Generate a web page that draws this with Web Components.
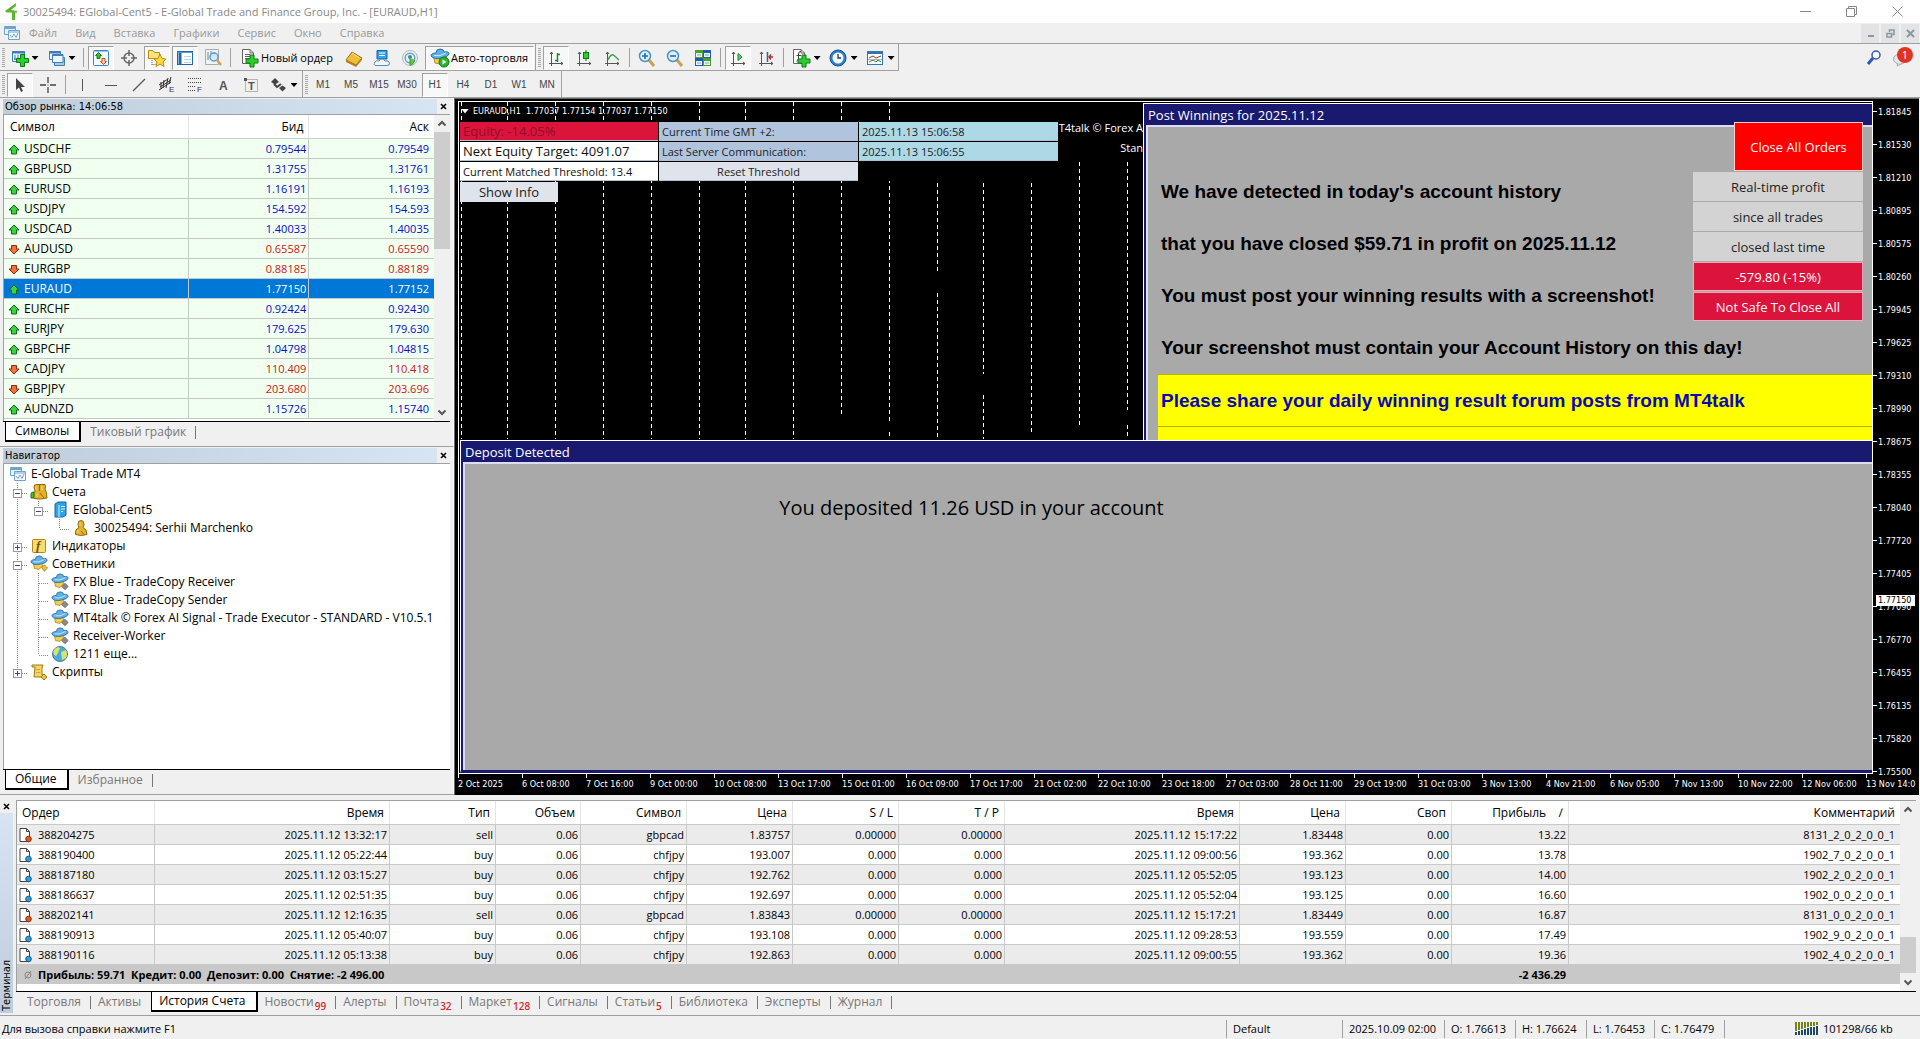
<!DOCTYPE html>
<html lang="ru">
<head>
<meta charset="utf-8">
<title>30025494: EGlobal-Cent5</title>
<style>
html,body{margin:0;height:100%}
body{background:#f0f0f0;color:#000;font:11px/16px "Open Sans","Noto Sans",sans-serif;overflow:hidden}
</style>
</head>
<body>
<mt-window>
  <mt-titlebar slot="top">30025494: EGlobal-Cent5 - E-Global Trade and Finance Group, Inc. - [EURAUD,H1]</mt-titlebar>
  <mt-menubar slot="top"></mt-menubar>
  <mt-toolbars slot="top"></mt-toolbars>
  <mt-panel slot="left" heading="Обзор рынка: 14:06:58" tabs="Символы|Тиковый график"><mt-market></mt-market></mt-panel>
  <mt-panel slot="left" grow heading="Навигатор" tabs="Общие|Избранное"><mt-navigator></mt-navigator></mt-panel>
  <mt-chart slot="main"></mt-chart>
  <mt-terminal slot="bottom"></mt-terminal>
  <mt-status slot="bottom"></mt-status>
</mt-window>
<script>
const BASE = `:host,*{box-sizing:border-box}button{font:inherit;color:inherit;background:none;border:0;padding:0;margin:0}svg{display:block}`;
function define(tag, css, render) {
  customElements.define(tag, class extends HTMLElement {
    constructor() { super(); this.attachShadow({ mode: "open" }); }
    connectedCallback() {
      this.shadowRoot.innerHTML = `<style>${BASE}${css}</style>` + render(this);
    }
  });
}

/* ---------- icons ---------- */
const HAT = `<path d="M4 10 5 15 10 16 14 12 13 8Z" fill="#f5cf46" stroke="#b58d1c"/><path d="M1 8Q1 5 6 5Q6 1 10 1Q14 1 14 4Q19 3 19 6Q18 9 12 10Q4 12 1 8Z" fill="#5fb0e6" stroke="#2d6fa5"/><path d="M4 7.500Q10 9 16 5" fill="none" stroke="#cfeaff"/>`;
const AXES = `<path d="M4.500 3V17M2 14.500H16M3 5 4.500 3 6 5M14 13 16 14.500 14 16" fill="none" stroke="#555"/>`;
const PLUS = (x, y) => `<path transform="translate(${x} ${y})" d="M4 0H8V4H12V8H8V12H4V8H0V4H4Z" fill="#2bd12b" stroke="#0c7a12"/>`;
const DOC = `<path d="M2.500 1.500H10L13.500 5V15.500H2.500Z" fill="#fff" stroke="#666"/><path d="M10 1.500V5H13.500" fill="none" stroke="#666"/>`;
const ICONS = {
  logo: [20, `<path d="M14 1 3 9 4.500 10.500H15V9L9 8 14 4Z" fill="#5cb531"/><path d="M11.500 9V18" stroke="#5cb531" stroke-width="3"/>`],
  charts: [18, `<path d="M1.500 2.500H12.500V10.500H1.500Z" fill="#e6f3ff" stroke="#6fa4cf"/><path d="M1 4H13" stroke="#6fa4cf" stroke-width="2"/><path d="M5.500 6.500H16.500V15.500H5.500Z" fill="#f4faff" stroke="#6fa4cf"/><path d="M5 8H17" stroke="#6fa4cf"/><path d="M7 11 9 13.500 11 10 13 13.500 15 9" fill="none" stroke="#6fa4cf"/>`],
  newchart: [18, `<path d="M1.500 2.500H13.500V12.500H1.500Z" fill="#eaf5ff" stroke="#3f7fb5"/><path d="M1 3.500H14" stroke="#3f7fb5" stroke-width="2"/><path d="M4 6V11M7 5.500V10M3 10H8" stroke="#3f7fb5"/>${PLUS(5.5,5.5)}`],
  profiles: [18, `<path d="M1.500 2.500H12.500V10.500H1.500Z" fill="#eaf5ff" stroke="#3f7fb5"/><path d="M1 3.500H13" stroke="#3f7fb5" stroke-width="2"/><path d="M6.500 8.500H16.500V16.500H6.500Z" fill="#a9c9e6" stroke="#3f7fb5"/><path d="M4.500 5.500H15V13.500H4.500Z" fill="#eaf5ff" stroke="#3f7fb5"/><path d="M4 6.500H15" stroke="#3f7fb5"/>`],
  market: [18, `<rect x="1.500" y="1.500" width="15" height="15" rx="1" fill="#f3faff" stroke="#3a85c4"/><path d="M1.500 2.500H16.500" stroke="#9cc4e4"/><path d="M6.500 3.500 9.500 6.500H8V9.500H5V6.500H3.500Z" fill="#35c535" stroke="#107b14"/><path d="M11.500 15.500 14.500 12.500H13V9.500H10V12.500H8.500Z" fill="#ffd0a8" stroke="#d0501c"/>`],
  cross: [18, `<circle cx="9" cy="9" r="5" fill="none" stroke="#666" stroke-width="1.500"/><path d="M9 1V7M9 11V17M1 9H7M11 9H17" stroke="#666" stroke-width="1.500"/>`],
  navig: [20, `<path d="M1.500 2.500H6L7.500 4.500H12.500V10.500H1.500Z" fill="#ffe37a" stroke="#b98c17"/><path d="M5 12V17M5.500 16.500H10" stroke="#666" stroke-dasharray="1 1"/><path d="M13 6 15 10.500 19 11 16 14 17 18.500 13 16 9 18.500 10 14 7 11 11 10.500Z" fill="#ffd83c" stroke="#b98c17"/>`],
  term: [18, `<rect x="1.500" y="2.500" width="15" height="13" fill="#fff" stroke="#2068ad"/><path d="M1.500 3.500H16.500" stroke="#5b9bd0"/><path d="M4 4V15" stroke="#2068ad" stroke-width="3"/><path d="M8 7.500H15M8 10.500H15M8 13.500H15" stroke="#b7d7f1"/>`],
  tester: [20, `<path d="M2.500 1.500H15.500V16.500H2.500Z" fill="#eef3f7" stroke="#aaa"/><path d="M5 4V12M8 3V9M11 4V8" stroke="#688" /><circle cx="11" cy="9" r="4" fill="#cfeaff" fill-opacity=".8" stroke="#5b9bd0" stroke-width="1.500"/><path d="M14 12 18 17" stroke="#d0a24a" stroke-width="2.500"/>`],
  order: [20, `${DOC}<path d="M5 6.500H10M5 8.500H11M5 10.500H9" stroke="#666"/>${PLUS(6,7)}`],
  meta: [18, `<path d="M1 11 7 3 17 9 11 16Z" fill="#f0bf3a" stroke="#9d6f10"/><path d="M1 11 11 16 17 9 17 11 11 18 1 13Z" fill="#b8801a"/><path d="M7 4 14 8.500" stroke="#ffe9a0"/>`],
  vps: [18, `<path d="M4 1.500H14V10H4Z" fill="#2ea3ea" stroke="#12669c"/><path d="M6 4H12M6 6.500H12" stroke="#fff"/><path d="M3 16.500Q0 16 2 13Q3 11 6 12Q9 8 12 12Q16 11 16.500 14Q17 16.500 14 16.500Z" fill="#eef6ff" stroke="#5b86b5"/>`],
  signal: [18, `<circle cx="9" cy="9" r="7.500" fill="#e9f4f7" stroke="#a9b9bf"/><circle cx="9" cy="9" r="4.800" fill="none" stroke="#6c9fba" stroke-width="1.400"/><circle cx="9" cy="8" r="2" fill="#3d86b5"/><path d="M9 9V16.500Q13 15 14 11" fill="#63c14c" stroke="#3f9f35"/>`],
  auto: [20, `${HAT}<circle cx="14" cy="14" r="5" fill="#2cb52c" stroke="#0c7a12"/><path d="M12.500 11.500 16.500 14 12.500 16.500Z" fill="#fff"/>`],
  bars: [18, `${AXES}<path d="M10.500 4V13M10.500 5.500H13M8 11.500H10.500" stroke="#1b8a34" stroke-width="1.500"/>`],
  candles: [18, `${AXES}<path d="M11 1V12" stroke="#0c7a12"/><rect x="8.500" y="3.500" width="5" height="6" fill="#2bd12b" stroke="#0c7a12"/>`],
  line: [18, `${AXES}<path d="M5 11Q8 4 11 6.500T16 11" fill="none" stroke="#3aa04a" stroke-width="1.400"/>`],
  zin: [18, `<path d="M11 11 16 17" stroke="#c9a24c" stroke-width="3"/><circle cx="7" cy="7" r="5.500" fill="#d9f0ff" stroke="#4a92c8" stroke-width="1.500"/><path d="M4 7H10M7 4V10" stroke="#2a6aa4" stroke-width="1.600"/>`],
  zout: [18, `<path d="M11 11 16 17" stroke="#c9a24c" stroke-width="3"/><circle cx="7" cy="7" r="5.500" fill="#d9f0ff" stroke="#4a92c8" stroke-width="1.500"/><path d="M4 7H10" stroke="#2a6aa4" stroke-width="1.600"/>`],
  tile: [18, `<rect x="1" y="1" width="8" height="8" fill="#4c9f2a"/><rect x="9" y="1" width="8" height="8" fill="#1f5cb0"/><rect x="1" y="9" width="8" height="8" fill="#1f5cb0"/><rect x="9" y="9" width="8" height="8" fill="#4c9f2a"/><path d="M2 4H8V8H2ZM10 4H16V8H10ZM2 12H8V16H2ZM10 12H16V16H10Z" fill="#e7f4ff"/><path d="M3 6H7M11 6H15M3 14H7M11 14H15" stroke="#7aa"/>`],
  scroll: [18, `${AXES}<path d="M9 4.500 13 8 9 11.500Z" fill="#5bd36a" stroke="#1b8a34"/>`],
  shift: [18, `${AXES}<path d="M10.500 3V13" stroke="#2068ad" stroke-width="1.500"/><path d="M16 8H12M14 5.500 12 8 14 10.500" fill="none" stroke="#b03020" stroke-width="1.400"/>`],
  indi: [20, `${DOC}<path d="M10 3.500Q7.500 3 7.500 6V11Q7.500 13 5.500 13M5.500 7.500H10" fill="none" stroke="#444"/>${PLUS(7,7)}`],
  clock: [20, `<circle cx="10" cy="10" r="8" fill="#2a7fd0" stroke="#15508c"/><circle cx="10" cy="10" r="5.500" fill="#f2f8ff"/><path d="M10 6V10H13" fill="none" stroke="#333" stroke-width="1.300"/>`],
  tmpl: [20, `<rect x="2.500" y="3.500" width="15" height="13" fill="#fff" stroke="#3277b5"/><path d="M2 4.500H18" stroke="#3277b5" stroke-width="3"/><path d="M4 10 8 8 11 10 16 8" fill="none" stroke="#b03020"/><path d="M4 14 8 12 11 14 13 12 16 14" fill="none" stroke="#1b8a34"/><path d="M3 11.500H17" stroke="#9bb"/>`],
  cursor: [16, `<path d="M4 1V13L7 10.500 9 15 11 14 9 10H13Z" fill="#444"/>`],
  plus: [18, `<path d="M9 1V7M9 11V17M1 9H7M11 9H17" stroke="#444" stroke-width="1.300"/><path d="M9 8.500V9.500" stroke="#444"/>`],
  vline: [16, `<path d="M7.500 2V14" stroke="#555"/>`],
  hline: [16, `<path d="M2 8.500H14" stroke="#555"/>`],
  tline: [16, `<path d="M2 14 14 2" stroke="#555" stroke-width="1.200"/>`],
  chan: [18, `<path d="M1 9 10 3M1 14 13 6M3 6V13M6 4 5 12M10 2 8 12M13 1 11 8M2 11 13 4" stroke="#333"/><text x="11" y="16" font-family="Liberation Sans" font-size="8" fill="#333">E</text>`],
  fibo: [18, `<path d="M2 2.500H16M2 6.500H16M2 10.500H10M2 14.500H10" stroke="#444" stroke-dasharray="1 1"/><text x="11" y="16" font-family="Liberation Sans" font-size="8" fill="#333">F</text>`],
  atext: [16, `<text x="4" y="13" font-family="Liberation Sans" font-weight="700" font-size="12" fill="#555">A</text>`],
  label: [16, `<rect x="2.500" y="2.500" width="12" height="12" fill="none" stroke="#777" stroke-dasharray="1 1"/><text x="5" y="13" font-family="Liberation Sans" font-weight="700" font-size="11" fill="#555">T</text><path d="M1 1H4V4H1Z" fill="#555"/>`],
  arrows: [18, `<path d="M1 6 5 2 9 6 5 8.500Z" fill="#444"/><path d="M4 8 7 11 11 8" fill="none" stroke="#444" stroke-width="2"/><path d="M9 12 12.500 9.500 16 12 12.500 15.500Z" fill="#444"/>`],
  search: [18, `<circle cx="11" cy="6" r="4" fill="#f6faff" stroke="#2d57b8" stroke-width="1.500"/><path d="M8 9 3 15" stroke="#2d57b8" stroke-width="3"/>`],
  chat: [18, `<ellipse cx="8" cy="10" rx="6.500" ry="5" fill="#e4e6e8" stroke="#a4a8ac"/><path d="M6 14 5 17 10 14.500" fill="#e4e6e8" stroke="#a4a8ac"/>`],
  accounts: [18, `<path d="M1 15V11Q1 9 4 9V15Z" fill="#35c535" stroke="#107b14"/><path d="M4 4Q4 1 7 1.500L15 1.500Q16 4 15 6Q17 9 17 15Q10 17 4 15.500Q4 10 5 8Z" fill="#e2b22c" stroke="#8f6a10"/><path d="M9.500 2V8M10 10 14 15" stroke="#8f6a10"/><path d="M6 3V7M12 3V7M7 10V14" stroke="#f6dc7c"/>`],
  server: [18, `<path d="M4 3 7 1H15V14L12 16H4Z" fill="#2ea3ea" stroke="#12669c"/><path d="M8 4V16M10 5.500H14M10 8H14M10 10.500H12" stroke="#d6f1ff"/>`],
  user: [18, `<path d="M6 5Q6 1.500 9 1.500T12 5Q12 7 11 8.500Q15 10 15 15.500Q9 17.500 3.500 15.500Q3 10 7 8.500Q6 7 6 5Z" fill="#e2b22c" stroke="#8f6a10"/><path d="M9 12 12 15.500" stroke="#8f6a10"/><path d="M8 3.500V6.500M6 11V14" stroke="#f6dc7c"/>`],
  func: [18, `<rect x="2.500" y="2.500" width="13" height="13" rx="1" fill="#fbdc6a" stroke="#b18a1f"/><text x="6" y="13" font-family="Liberation Serif" font-style="italic" font-weight="700" font-size="13" fill="#6d5410">f</text>`],
  ea: [18, `<g transform="scale(.9)">${HAT}<path d="M13 14 16 11 19.500 14.500 16 18Z" fill="#f0c43c" stroke="#9d7a18"/></g>`],
  eag: [18, `<g transform="scale(.9)">${HAT}<path d="M12 15 15.500 11.500 19 15 15.500 18.500Z" fill="#8b8b8b" stroke="#666"/></g>`],
  globe: [18, `<circle cx="9" cy="9" r="7.500" fill="#4aa9de" stroke="#4a7c9a"/><path d="M3 5Q6 1 9 3L7 8 5 11Q1 9 3 5ZM10 7 15 5Q17 9 15 13L11 15Z" fill="#d5e46a"/>`],
  script: [18, `<path d="M2 2H13L12 5V12H15V14H4L5 4H2Z" fill="#f4d363" stroke="#9d7a18"/><path d="M6.500 6.500H10M6.500 9.500H10" stroke="#9d7a18" stroke-dasharray="1 1"/><path d="M11 14 14 11 17 14 14 17Z" fill="#f0c43c" stroke="#9d7a18"/>`],
  up: [12, `<path d="M6 2 11 7H8.500V11H3.500V7H1Z" fill="#3fd03f" stroke="#0d6d14"/>`],
  down: [12, `<path d="M6 11 11 6H8.500V2.500H3.500V6H1Z" fill="#f0723a" stroke="#8f2c08"/>`],
  sell: [16, `<path d="M2 1.500H8.500L11.500 4.500V14.500H2Z" fill="#fff" stroke="#444"/><path d="M8.500 1.500V4.500H11.500" fill="none" stroke="#444"/><circle cx="10.500" cy="12" r="2.800" fill="#e2572b" stroke="#8f2c08"/>`],
  buy: [16, `<path d="M2 1.500H8.500L11.500 4.500V14.500H2Z" fill="#fff" stroke="#444"/><path d="M8.500 1.500V4.500H11.500" fill="none" stroke="#444"/><circle cx="10.500" cy="12" r="2.800" fill="#2f9fe0" stroke="#12568c"/>`],
  total: [12, `<circle cx="6" cy="6" r="3" fill="none" stroke="#888"/><path d="M3 10 9 2" stroke="#888"/>`],
  traffic: [24, `<g stroke-width="2"><path d="M1 5V14M4 5V13M7 5V12M10 5V11M13 5V10M16 5V9M19 5V9M22 5V8" stroke="#75851b"/><path d="M1 15V18M4 14V18M7 13V18M10 12V18M13 11V18M16 10V18M19 10V18M22 9V18" stroke="#1c4a63"/></g>`]
};
function icon(n) { const [s, b] = ICONS[n]; return `<svg width="${s}" height="${s}" viewBox="0 0 ${s} ${s}" aria-hidden="true">${b}</svg>`; }
define("mt-icon", `:host{display:inline-flex;flex:none}`, e => icon(e.getAttribute("name")));

/* ---------- window frame ---------- */
define("mt-window", `
:host{display:flex;flex-direction:column;height:100vh}
main{flex:1;min-height:0;display:flex}
aside{width:454px;flex:none;display:flex;flex-direction:column;border-bottom:1px solid #a0a0a0}
section{flex:1;min-width:0;display:flex}
`, () => `<slot name="top"></slot><main><aside><slot name="left"></slot></aside><section><slot name="main"></slot></section></main><slot name="bottom"></slot>`);

define("mt-titlebar", `
:host{display:flex;align-items:center;height:23px;background:#fff;color:#888;font-size:11px;padding-left:2px}
.t{flex:1;padding-left:1px}
button{width:46px;height:22px;display:flex;align-items:center;justify-content:center}
`, () => `<mt-icon name="logo"></mt-icon><span class="t"><slot></slot></span>
<button aria-label="Свернуть"><svg width="11" height="11"><path d="M0 5.500H11" stroke="#888"/></svg></button>
<button aria-label="Развернуть"><svg width="11" height="11"><path d="M.5 2.500H8.500V10.500H.5ZM2.500 2V.5H10.500V8.500H9" fill="none" stroke="#888"/></svg></button>
<button aria-label="Закрыть"><svg width="11" height="11"><path d="M.5 .5 10.500 10.500M10.500 .5 .5 10.500" stroke="#888"/></svg></button>`);

define("mt-menubar", `
:host{display:flex;align-items:center;height:21px;border-bottom:1px solid #a0a0a0;color:#999;font-size:11px;padding-left:3px}
nav{display:flex;flex:1;padding-left:8px;gap:18px}
.w{display:flex;gap:2px;padding-right:1px}
.w button{width:18px;height:19px;background:#e1e3e5;display:flex;align-items:center;justify-content:center}
`, () => `<mt-icon name="charts"></mt-icon><nav>${["Файл","Вид","Вставка","Графики","Сервис","Окно","Справка"].map(t => `<button>${t}</button>`).join("")}</nav>
<div class="w"><button aria-label="Свернуть"><svg width="9" height="9"><path d="M2 7H8" stroke="#8d96a0" stroke-width="2"/></svg></button>
<button aria-label="Восстановить"><svg width="9" height="9"><path d="M1 4.500H5.500V8H1ZM3.500 3V1H8V5.500H6.500" fill="none" stroke="#8d96a0" stroke-width="1.500"/></svg></button>
<button aria-label="Закрыть"><svg width="9" height="9"><path d="M1 1 8 8M8 1 1 8" stroke="#8d96a0" stroke-width="2"/></svg></button></div>`);

define("mt-tool", `
:host{display:flex;flex:none;height:25px;padding:1px 1px 0}
button{min-width:26px;height:24px;display:flex;align-items:center;justify-content:center;border:1px solid transparent;color:#444;font-family:"Liberation Sans",sans-serif;font-size:10px}
:host([label]) button{font:11px/20px "Open Sans",sans-serif;color:#000;padding:0 5px 0 4px}
:host([label]) mt-icon{width:21px}
:host([on]) button{background:#f8f8f8;border-color:#a0a0a0 #fff #fff #a0a0a0}
i{width:7px;height:4px;background:#000;clip-path:polygon(0 0,100% 0,50% 100%);margin-left:3px}
:host([menu]) button{width:35px}
`, e => { const n = e.getAttribute("name"), l = e.getAttribute("label");
  return `<button aria-label="${l || e.getAttribute("text") || n}">${n ? `<mt-icon name="${n}"></mt-icon>` : ""}${l || e.getAttribute("text") || ""}${e.hasAttribute("menu") ? "<i></i>" : ""}</button>`; });

define("mt-toolbars", `
:host{display:block;border-bottom:1px solid #a0a0a0}
.r{display:flex;height:27px}
.r+.r{height:26px}
.g{display:flex;border-right:1px solid #a0a0a0;padding-top:1px}
.r:first-of-type .g{border-bottom:1px solid #a0a0a0}
.sp{flex:1}
u{width:3px;margin:3px 1px 3px 2px;background:repeating-linear-gradient(#a8a8a8 0 1px,#f0f0f0 1px 2px);flex:none}
s{width:1px;margin:3px 3px;background:#a0a0a0;flex:none}
.a{position:relative;display:flex;align-items:center;gap:9px;padding-right:10px}
b{position:absolute;right:7px;top:3px;width:16px;height:16px;border-radius:8px;background:#e03423;color:#fff;font:11px/16px "Open Sans",sans-serif;text-align:center}
`, () => {
  const T = (n, a = "") => `<mt-tool name="${n}" ${a}></mt-tool>`, S = "<s></s>", G = "<u></u>";
  const one = T("newchart","menu")+T("profiles","menu")+S+T("market","on")+T("cross")+T("navig","on")+T("term","on")+T("tester")+S
    +T("order",'label="Новый ордер"')+T("meta")+T("vps")+T("signal")+T("auto",'label="Авто-торговля" on');
  const two = T("bars","on")+T("candles")+T("line")+S+T("zin")+T("zout")+T("tile")+S+T("scroll","on")+T("shift")+S+T("indi","menu")+T("clock","menu")+T("tmpl","menu");
  const three = T("cursor","on")+T("plus")+S+["vline","hline","tline","chan","fibo","atext","label"].map(n => T(n)).join("")+T("arrows","menu");
  const four = ["M1","M5","M15","M30","H1","H4","D1","W1","MN"].map(t => `<mt-tool text="${t}" ${t === "H1" ? "on" : ""}></mt-tool>`).join("");
  return `<div class="r"><div class="g">${G}${one}</div><div class="g">${G}${two}</div><span class="sp"></span><div class="a"><mt-icon name="search"></mt-icon><mt-icon name="chat"></mt-icon><b>1</b></div></div>
<div class="r"><div class="g">${G}${three}</div><div class="g">${G}${four}</div></div>`;
});

/* ---------- docked panels ---------- */
define("mt-tabs", `
:host{display:flex;height:22px;border-top:1px solid #000;background:#f0f0f0;color:#777;font-size:12px;padding-left:2px}
button{height:20px;padding:0 10px 0 var(--tab-pad,10px);display:flex;align-items:center;position:relative;white-space:nowrap}
button:not(.on)::after{content:"";position:absolute;right:0;top:4px;height:13px;width:1px;background:#777}
button.on{background:#fff;color:#000;border:1px solid #000;border-right-width:2px;border-bottom-width:2px;border-top:0}
sub{font-size:10px;line-height:10px;font-weight:600;color:#d62a2a;padding:8px 0 0 1px;vertical-align:baseline}
button.before::after{display:none}
`, e => { const on = +(e.getAttribute("on") || 0);
  return e.getAttribute("tabs").split("|").map((t, i) => { const [a, n] = t.split("#");
    return `<button role="tab" aria-selected="${i === on}" class="${i === on ? "on" : i === on - 1 ? "before" : ""}">${a}${n ? `<sub>${n}</sub>` : ""}</button>`; }).join(""); });

define("mt-scroll", `
:host{display:flex;flex-direction:column;align-items:center;width:16px;flex:none;background:#f0f0f0}
svg{flex:none}
i{width:100%;background:#cdcdcd}
`, e => `<svg width="16" height="17"><path d="M4.500 10.500 8 7 11.500 10.500" fill="none" stroke="#555" stroke-width="2"/></svg>
<span style="flex:${e.getAttribute("before")}"></span><i style="flex:${e.getAttribute("size")}"></i><span style="flex:${e.getAttribute("after")}"></span>
<svg width="16" height="17"><path d="M4.500 6.500 8 10 11.500 6.500" fill="none" stroke="#555" stroke-width="2"/></svg>`);

define("mt-panel", `
:host{display:flex;flex-direction:column;padding:1px 3px 3px 3px;border-right:1px solid #fff;--tab-pad:9px}
:host([grow]){flex:1;min-height:0;border-top:1px solid #a0a0a0}
header{display:flex;height:15px;align-items:center;font:11px/15px "DejaVu Sans Condensed","DejaVu Sans",sans-serif;flex:none}
h2{font:inherit;margin:0;flex:1;padding-left:2px;background:linear-gradient(90deg,#bfcddb,#d7e4f2)}
header button{width:13px;height:14px;display:flex;align-items:center;justify-content:center}
.b{flex:1;min-height:0;display:flex;background:#fff;border:1px solid #a0a0a0;border-width:1px 0 0 1px}
`, e => `<header><h2>${e.getAttribute("heading")}</h2><button aria-label="Закрыть"><svg width="7" height="7"><path d="M1 1 6 6M6 1 1 6" stroke="#000" stroke-width="1.600"/></svg></button></header><div class="b"><slot></slot></div><mt-tabs tabs="${e.getAttribute("tabs")}"></mt-tabs>`);

const QUOTES = `USDCHF 0.79544 0.79549 u|GBPUSD 1.31755 1.31761 u|EURUSD 1.16191 1.16193 u|USDJPY 154.592 154.593 u|USDCAD 1.40033 1.40035 u|AUDUSD 0.65587 0.65590 d|EURGBP 0.88185 0.88189 d|EURAUD 1.77150 1.77152 s|EURCHF 0.92424 0.92430 u|EURJPY 179.625 179.630 u|GBPCHF 1.04798 1.04815 u|CADJPY 110.409 110.418 d|GBPJPY 203.680 203.696 d|AUDNZD 1.15726 1.15740 u`.split("|").map(r => r.split(" "));
define("mt-market", `
:host{display:flex;flex:1}
.t{flex:1;padding-bottom:2px}
table{border-collapse:separate;border-spacing:0;table-layout:fixed;width:100%}
th{font-weight:400;font-size:12px;height:24px;text-align:right;padding:0 5px;border-right:1px solid #e4e4e4;border-bottom:1px solid #ccc}
th:first-child{text-align:left;padding-left:6px}
td{height:20px;padding:0 2px;background:#f0fff0;border-right:1px solid #c4c8c4;border-bottom:1px solid #c4c8c4;text-align:right;color:#0a0ac8}
td:last-child,th:last-child{padding-right:4px;border-right-color:transparent}
td:first-child{text-align:left;color:#000;font-size:12px;padding-left:4px}
td div{display:flex;align-items:center;gap:4px}
.d td:not(:first-child){color:#d01414}
.s td,.s td:first-child,.s td:not(:first-child){background:#0078d7;color:#fff}
`, () => `<div class="t"><table><colgroup><col style="width:43%"><col style="width:28%"><col></colgroup><thead><tr><th>Символ</th><th>Бид</th><th>Аск</th></tr></thead><tbody>
${QUOTES.map(([s,b,a,k]) => `<tr class="${k}"><td><div>${icon(k === "d" ? "down" : "up")}${s}</div></td><td>${b}</td><td>${a}</td></tr>`).join("")}</tbody></table></div><mt-scroll before="0" size="12" after="16"></mt-scroll>`);

const CELL = {
  " ": ``, v: `<path d="M10.500 0V18"/>`, t: `<path d="M10.500 0V18M11 10.500H21"/>`, l: `<path d="M10.500 0V10M11 10.500H21"/>`,
  "-": `<path d="M10.500 0V18M15 10.500H21"/>`, m: `<path d="M10.500 0V6M15 10.500H21"/>`, "+": `<path d="M10.500 0V18M15 10.500H21"/>`, p: `<path d="M10.500 0V6M15 10.500H21"/>`
};
const cell = c => `<svg width="21" height="18" fill="none" stroke="#888" stroke-dasharray="1 1">${CELL[c]}${"-m+p".includes(c) ? `<g stroke-dasharray="none"><rect x="6.500" y="6.500" width="8" height="8" fill="#fff" stroke="#999"/><path d="M8 10.500H13${"+p".includes(c) ? "M10.500 8V13" : ""}" stroke="#3a4a8a"/></g>` : ""}</svg>`;
define("mt-navigator", `
:host{display:block;flex:1;padding:1px 0 0 3px;font-size:12px;line-height:18px}
ul{list-style:none;margin:0;padding:0}
li{display:flex;height:18px;align-items:center;white-space:nowrap}
.i{width:21px;display:flex;justify-content:center;margin-right:3px;flex:none}
li svg{flex:none}
`, () => `<ul>${[["","charts","E-Global Trade MT4"],["-","accounts","Счета"],["vm","server","EGlobal-Cent5"],["v l","user","30025494: Serhii Marchenko"],["+","func","Индикаторы"],["-","ea","Советники"],["vt","eag","FX Blue - TradeCopy Receiver"],["vt","eag","FX Blue - TradeCopy Sender"],["vt","eag","MT4talk © Forex AI Signal - Trade Executor - STANDARD - V10.5.1"],["vt","eag","Receiver-Worker"],["vl","globe","1211 еще..."],["p","script","Скрипты"]]
  .map(([c,i,t]) => `<li>${[...c].map(cell).join("")}<span class="i">${icon(i)}</span>${t}</li>`).join("")}</ul>`);

/* ---------- chart ---------- */
define("mt-dialog", `
:host{display:flex;flex-direction:column;border:1px solid #fff;background:#191970;padding:1px 0 0 1px}
h3{margin:0;height:20px;flex:none;font:400 13px/20px "Open Sans",sans-serif;color:#fff;padding-left:3px}
div{flex:1;min-height:0;background:#a9a9a9;border:1px solid #dcdcf4;border-width:2px 0 0 2px;margin-left:1px}
`, e => `<h3>${e.getAttribute("heading")}</h3><div><slot></slot></div>`);

const X0 = 459, Y0 = 102; /* plot origin in window coordinates, used for the day separators */
const LINES = [[461],[507],[555],[603],[651],[699],[745],[793],[841,[102,417]],[889,[102,421],[432,439]],[937,[162,271],[293,439]],[983,[162,374],[395,439]],[1031,[162,434]],[1079,[162,428]],[1127,[162,410],[425,439]]];
define("mt-chart", `
:host{flex:1;min-width:0;min-height:0;display:grid;grid-template-columns:1fr 46px;grid-template-rows:minmax(0,1fr) 21px;background:#000;padding:2px 0 0 3px;margin-right:1px;border-top:1px solid #696969;border-left:1px solid #696969;color:#fff;font:9px/12px "DejaVu Sans Condensed","DejaVu Sans",sans-serif}
.plot{position:relative;overflow:hidden;border:1px solid #fff;min-width:0;min-height:0}
.grid{position:absolute;left:0;top:0}
.price{margin-top:-6px}
.price div{height:33px;display:flex;align-items:center;gap:1px}
.price div::before,.time span::before{content:"";background:#fff}
.price div::before{width:4px;height:1px}
.p{position:relative;min-height:0}
.tag{position:absolute;left:3px;top:494px;background:#fff;color:#000;line-height:11px;padding:0 4px 0 2px}
.time{grid-column:1/3;display:flex;white-space:nowrap;min-width:0}
.time span{width:64px;flex:none;display:flex;flex-direction:column}
.time span::before{width:1px;height:4px}
.head{position:absolute;left:2px;top:3px;display:flex;gap:4px;align-items:center}
.head i{width:8px;height:5px;background:#fff;clip-path:polygon(0 0,100% 0,50% 100%)}
.info{position:absolute;left:1px;top:20px;display:grid;grid-template-columns:198px 199px 199px;gap:1px;font:11px/19px "Open Sans",sans-serif;color:#222;background:#000}
.info>*{height:19px;padding:0 3px;text-align:left;white-space:nowrap;border-bottom:1px solid #b0c0cc}
.info .big{font-size:13px}
.info button{text-align:center;background:#dfe4ec}
.red{background:#dc143c;color:#8f0f25}.w{background:#fff;color:#111}.st{background:#b0c4de}.lb{background:#add8e6}
.sig{position:absolute;top:16px;left:599px;width:85px;display:flex;flex-direction:column;align-items:flex-end;font:11px/20px "Open Sans",sans-serif;white-space:nowrap;background:#000}
.show{position:absolute;left:1px;top:80px;width:98px;height:20px;background:#dfe4ec;color:#222;font:13px/19px "Open Sans",sans-serif}
.post{position:absolute;right:-1px;top:1px;width:730px;height:400px}
.dep{position:absolute;left:1px;right:-1px;top:338px;bottom:0;border-bottom:3px solid #191970}
.post p{margin:0;font:700 19px/52px "Liberation Sans",sans-serif;color:#000;padding-left:13px}
.post p:first-child{margin-top:39px}
.post .y{margin-left:10px;padding-left:3px;background:#ff0;color:#0a0ab4;border-top:1px solid #b4b400;height:52px;line-height:51px}
.dep p{margin:29px 28% 0 0;text-align:center;font:20px/30px "Open Sans",sans-serif;color:#000}
.btns{position:absolute;right:9px;top:20px;display:flex;flex-direction:column;align-items:flex-end;font:13px/20px "Open Sans",sans-serif;color:#222;gap:1px}
.btns *{width:170px;height:29px;background:#d3d3d3;display:flex;align-items:center;justify-content:center}
.btns .close{width:129px;height:49px;background:#f00;color:#fff;border:1px solid #fcc}
.btns .n{background:#dc143c;color:#fff;border:1px solid #f5a8b8}
`, () => `<div class="plot">
<svg class="grid" width="690" height="345" stroke="#fff" stroke-dasharray="4 3" shape-rendering="crispEdges">${LINES.map(([x, ...s]) => (s.length ? s : [[Y0, 439]]).map(([a, b]) => `<path d="M${x - X0 + .5} ${a - Y0}V${b - Y0}"/>`).join("")).join("")}</svg>
<div class="head"><i></i><span>EURAUD,H1&nbsp; 1.77037 1.77154 1.77037 1.77150</span></div>
<div class="sig"><div>T4talk © Forex A</div><div>Stan</div></div>
<div class="info"><span class="red big">Equity: -14.05%</span><span class="st">Current Time GMT +2:</span><span class="lb">2025.11.13 15:06:58</span>
<span class="w big">Next Equity Target: 4091.07</span><span class="st">Last Server Communication:</span><span class="lb">2025.11.13 15:06:55</span>
<span class="w">Current Matched Threshold: 13.4</span><button>Reset Threshold</button></div>
<button class="show">Show Info</button>
<mt-dialog class="post" heading="Post Winnings for 2025.11.12"><p>We have detected in today's account history</p><p>that you have closed $59.71 in profit on 2025.11.12</p><p>You must post your winning results with a screenshot!</p><p>Your screenshot must contain your Account History on this day!</p><p class="y">Please share your daily winning result forum posts from MT4talk</p><p class="y">&nbsp;</p></mt-dialog>
<mt-dialog class="dep" heading="Deposit Detected"><p>You deposited 11.26 USD in your account</p></mt-dialog>
<div class="btns"><button class="close">Close All Orders</button><span>Real-time profit</span><span>since all trades</span><span>closed last time</span><button class="n">-579.80 (-15%)</button><button class="n">Not Safe To Close All</button></div>
</div>
<div class="p"><div class="price">${"1.81845 1.81530 1.81210 1.80895 1.80575 1.80260 1.79945 1.79625 1.79310 1.78990 1.78675 1.78355 1.78040 1.77720 1.77405 1.77090 1.76770 1.76455 1.76135 1.75820 1.75500".split(" ").map(t => `<div>${t}</div>`).join("")}</div><span class="tag">1.77150</span></div>
<div class="time">${"2 Oct 2025|6 Oct 08:00|7 Oct 16:00|9 Oct 00:00|10 Oct 08:00|13 Oct 17:00|15 Oct 01:00|16 Oct 09:00|17 Oct 17:00|21 Oct 02:00|22 Oct 10:00|23 Oct 18:00|27 Oct 03:00|28 Oct 11:00|29 Oct 19:00|31 Oct 03:00|3 Nov 13:00|4 Nov 21:00|6 Nov 05:00|7 Nov 13:00|10 Nov 22:00|12 Nov 06:00|13 Nov 14:0".split("|").map(t => `<span>${t}</span>`).join("")}</div>`);

/* ---------- terminal ---------- */
const HEAD = ["Ордер","Время","Тип","Объем","Символ","Цена","S / L","T / P","Время","Цена","Своп","Прибыль &nbsp;&nbsp;&nbsp;∕","Комментарий"];
const COLS = [138,235,106,85,106,106,106,106,235,106,106,117];
const ORDERS = `388204275|13:32:17|sell|gbpcad|1.83757|15:17:22|1.83448|13.22|8131_2_0_2_0_0_1
388190400|05:22:44|buy|chfjpy|193.007|09:00:56|193.362|13.78|1902_7_0_2_0_0_1
388187180|03:15:27|buy|chfjpy|192.762|05:52:05|193.123|14.00|1902_2_0_2_0_0_1
388186637|02:51:35|buy|chfjpy|192.697|05:52:04|193.125|16.60|1902_0_0_2_0_0_1
388202141|12:16:35|sell|gbpcad|1.83843|15:17:21|1.83449|16.87|8131_0_0_2_0_0_1
388190913|05:40:07|buy|chfjpy|193.108|09:28:53|193.559|17.49|1902_9_0_2_0_0_1
388190116|05:13:38|buy|chfjpy|192.863|09:00:55|193.362|19.36|1902_4_0_2_0_0_1`.split("\n").map(r => r.split("|"));
define("mt-terminal", `
:host{display:flex;margin-top:5px;border-bottom:1px solid #a0a0a0;padding-bottom:2px}
.side{width:16px;flex:none;display:flex;flex-direction:column;align-items:center;padding-right:3px}
.side button{height:13px;display:flex;align-items:center}
.side h2{flex:1;width:13px;margin:0;background:linear-gradient(#bfcddb,#d7e4f2);font:11px/13px "DejaVu Sans Condensed","DejaVu Sans",sans-serif;writing-mode:vertical-rl;transform:rotate(180deg);padding-top:2px}
.main{flex:1;min-width:0;display:flex;flex-direction:column;margin-right:4px}
.grid{display:flex;background:#fff;border:1px solid #a0a0a0;border-width:1px 0 0 1px}
.tw{flex:1;min-width:0;padding-bottom:7px}
table{width:100%;table-layout:fixed;border-collapse:separate;border-spacing:0}
th{font-weight:400;font-size:12px;height:23px;text-align:right;padding:0 5px;border-right:1px solid #e4e4e4;white-space:nowrap}
td{height:20px;padding:0 2px;text-align:right;border-right:1px solid #c8c8c8;border-top:1px solid #c8c8c8;white-space:nowrap}
td:last-child,th:last-child{padding-right:5px;border-right:0}
th:first-child{text-align:left;padding-left:5px}
td:first-child{padding-left:1px}
tbody tr:nth-child(odd){background:#ebebeb}
td div{display:flex;align-items:center;gap:4px}
tfoot td{background:#c8c8c8;border-color:#c8c8c8;font-weight:700}
tfoot div{padding-left:4px}
mt-tabs{--tab-pad:7px;padding-left:4px}
`, () => `<div class="side"><button aria-label="Закрыть"><svg width="7" height="7"><path d="M1 1 6 6M6 1 1 6" stroke="#000" stroke-width="1.600"/></svg></button><h2>Терминал</h2></div>
<div class="main"><div class="grid"><div class="tw"><table><colgroup>${COLS.map(w => `<col style="width:${w}px">`).join("")}<col></colgroup>
<thead><tr>${HEAD.map(h => `<th>${h}</th>`).join("")}</tr></thead><tbody>
${ORDERS.map(([o,t,k,s,p,t2,p2,pr,c]) => { const z = k === "sell" ? "0.00000" : "0.000";
  return `<tr><td><div>${icon(k)}${o}</div></td>${["2025.11.12 " + t,k,"0.06",s,p,z,z,"2025.11.12 " + t2,p2,"0.00",pr,c].map(v => `<td>${v}</td>`).join("")}</tr>`; }).join("")}
</tbody><tfoot><tr><td colspan="11"><div>${icon("total")}<span>Прибыль: 59.71&nbsp; Кредит: 0.00&nbsp; Депозит: 0.00&nbsp; Снятие: -2 496.00</span></div></td><td>-2 436.29</td><td></td></tr></tfoot></table></div>
<mt-scroll before="120" size="36" after="1"></mt-scroll></div>
<mt-tabs on="2" tabs="Торговля|Активы|История Счета|Новости#99|Алерты|Почта#32|Маркет#128|Сигналы|Статьи#5|Библиотека|Эксперты|Журнал"></mt-tabs></div>`);

define("mt-status", `
:host{display:flex;height:23px;align-items:center;white-space:nowrap;padding:3px 0 0 2px}
span{flex:1}
div{height:18px;line-height:18px;border-left:1px solid #a0a0a0;padding-left:6px}
div.n{display:flex;align-items:center;gap:4px;padding-left:10px;border:0}
`, () => `<span>Для вызова справки нажмите F1</span>` + [["Default",116],["2025.10.09 02:00",102],["O: 1.76613",71],["H: 1.76624",71],["L: 1.76453",68],["C: 1.76479",70]].map(([t,w]) => `<div style="width:${w}px">${t}</div>`).join("")
 + `<div style="width:61px"></div><div class="n" style="width:135px">${icon("traffic")}101298/66 kb</div>`);
</script>
</body>
</html>
